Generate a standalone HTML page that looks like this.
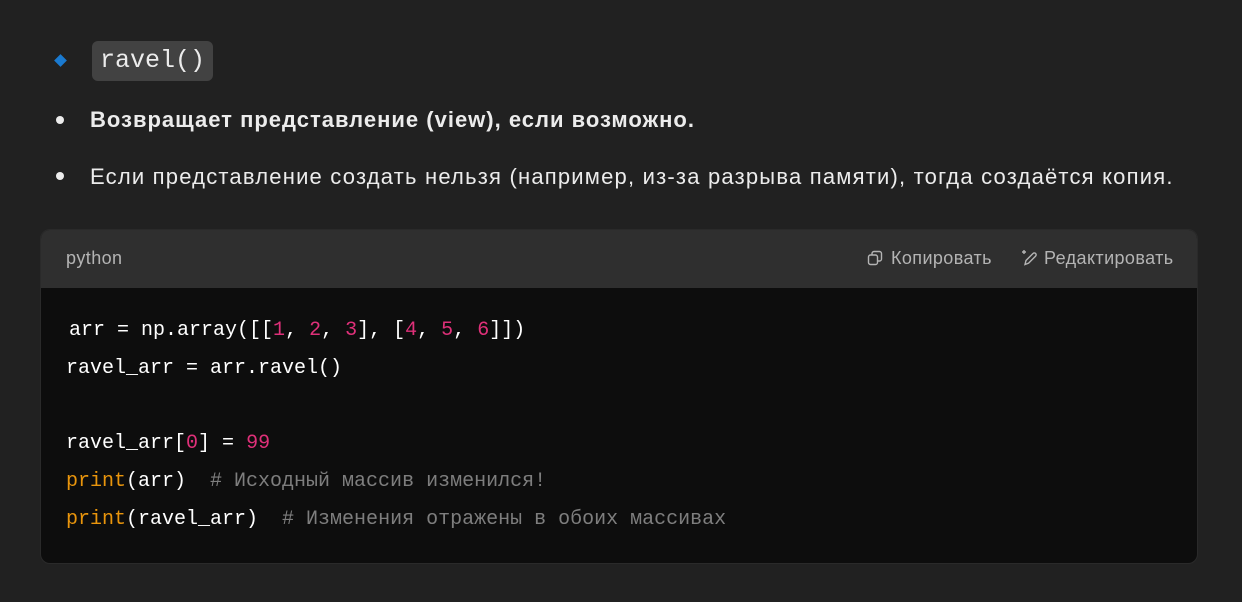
<!DOCTYPE html>
<html><head><meta charset="utf-8"><style>
body{margin:0;background:#212121;width:1242px;height:602px;overflow:hidden;font-family:"Liberation Sans","DejaVu Sans",sans-serif;color:#ececec;position:relative}
.abs{position:absolute;white-space:nowrap}
.diam{left:56px;top:56px;width:9px;height:9px;background:#1a7ad0;transform:rotate(45deg)}
.code{left:92px;top:41px;height:40px;background:#424242;border-radius:6px;padding:0 8px;font-family:"Liberation Mono",monospace;font-size:25px;line-height:40px;color:#ececec}
.dot{width:8px;height:8px;border-radius:50%;background:#ececec}
.t{font-size:22px;line-height:30px;left:90px;letter-spacing:1.2px}
.box{left:40px;top:229px;width:1158px;height:335px;border-radius:10px;overflow:hidden;background:#0d0d0d;border:1px solid #2a2a2a;box-sizing:border-box}
.hd{height:58px;background:#2f2f2f;position:relative;font-size:18px;color:#b4b4b4;letter-spacing:0.4px}
pre{margin:0;position:absolute;left:25px;top:82px;font-family:"Liberation Mono",monospace;font-size:20px;line-height:37.8px;color:#fff}
.n{color:#df3079}.k{color:#e9950c}.c{color:#7e7e7e}
</style></head><body>
<div class="abs diam"></div>
<div class="abs code">ravel()</div>
<div class="abs dot" style="left:56px;top:116px"></div>
<div class="abs t" style="top:105px;font-weight:bold;letter-spacing:1px">Возвращает представление (view), если возможно.</div>
<div class="abs dot" style="left:56px;top:172px"></div>
<div class="abs t" style="top:162px">Если представление создать нельзя (например, из-за разрыва памяти), тогда создаётся копия.</div>
<div class="abs box">
<div class="hd"><span class="abs" style="left:25px;top:18px">python</span>
<span class="abs" style="left:826px;top:18px"><svg width="16" height="16" viewBox="0 0 16 16" style="vertical-align:-2px;margin-right:8px" fill="none" stroke="#b4b4b4" stroke-width="1.4"><rect x="1.5" y="5" width="9" height="9.5" rx="2"/><path d="M5 4.5V3.5a2 2 0 0 1 2-2h5.5a2 2 0 0 1 2 2V9a2 2 0 0 1-2 2h-1.5"/></svg>Копировать</span>
<span class="abs" style="left:980px;top:18px"><svg width="17" height="17" viewBox="0 0 17 17" style="vertical-align:-2px;margin-right:6px" fill="none" stroke="#b4b4b4" stroke-width="1.4"><path d="M4 15.5l1-4 7-7a1.8 1.8 0 0 1 2.6 2.6l-7 7z"/><path d="M3 1v4M1 3h4"/></svg>Редактировать</span></div>
<pre><span style="padding-left:3px">arr</span> = np.array([[<span class="n">1</span>, <span class="n">2</span>, <span class="n">3</span>], [<span class="n">4</span>, <span class="n">5</span>, <span class="n">6</span>]])
ravel_arr = arr.ravel()

ravel_arr[<span class="n">0</span>] = <span class="n">99</span>
<span class="k">print</span>(arr)  <span class="c"># Исходный массив изменился!</span>
<span class="k">print</span>(ravel_arr)  <span class="c"># Изменения отражены в обоих массивах</span></pre>
</div>
</body></html>
